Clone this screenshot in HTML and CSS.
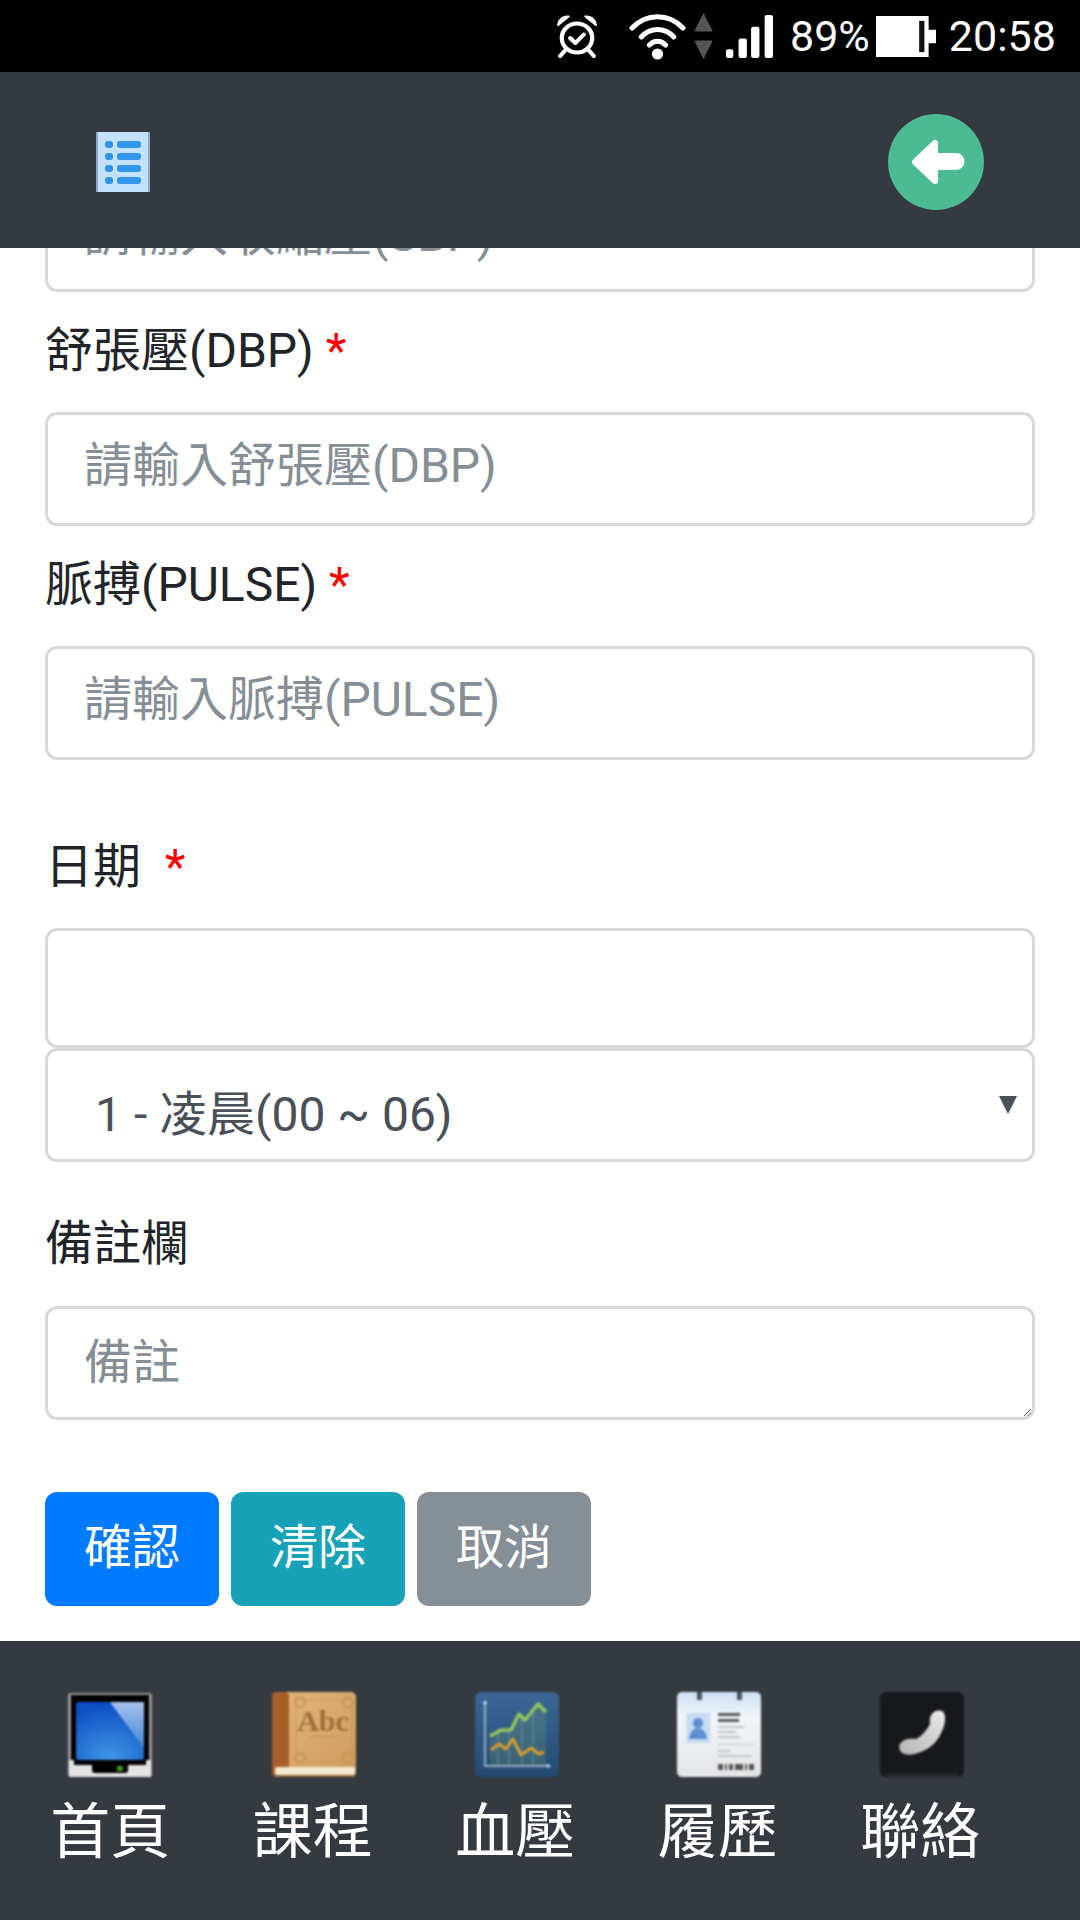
FILE: index.html
```html
<!DOCTYPE html>
<html lang="zh-Hant">
  <head>
    <meta charset="UTF-8" />
    <meta name="viewport" content="width=device-width, initial-scale=1.0" />
    <title>血壓</title>
    <link rel="stylesheet" href="styles.css">
  </head>
  <body>
    <div class="status-bar">
      <!-- alarm -->
      <svg class="st-alarm" width="42" height="44" viewBox="0 0 40 44" preserveAspectRatio="none" fill="none" stroke="#fff">
        <circle cx="20" cy="24" r="14.5" stroke-width="4" />
        <path d="M13.500 24l5 5 8-8.500" stroke-width="4" stroke-linecap="round" stroke-linejoin="round" />
        <path d="M2 11C3 5 7 2 12 2.500z M38 11C37 5 33 2 28 2.500z" fill="#fff" stroke-width="2" stroke-linejoin="round" />
        <path d="M9 36l-5 6M31 36l5 6" stroke-width="4" stroke-linecap="round" />
      </svg>
      <!-- wifi -->
      <svg class="st-wifi" width="57" height="48" viewBox="0 0 56 48" preserveAspectRatio="none" fill="none" stroke="#fff" stroke-width="5" stroke-linecap="round">
        <path d="M3 16C17 1 39 1 53 16" />
        <path d="M12 25C21 15 35 15 44 25" />
        <path d="M20 33C25 28 31 28 36 33" />
        <circle cx="28" cy="42" r="5.500" fill="#fff" stroke="none" />
      </svg>
      <!-- up and down arrows next to wifi -->
      <svg class="st-arrows" width="19" height="46" viewBox="0 0 18 46" preserveAspectRatio="none" fill="#545454">
        <path d="M9 1l8 17H1z M9 45L1 28h16z" stroke="#545454" stroke-linejoin="round" />
      </svg>
      <!-- signal -->
      <svg class="st-signal" width="47" height="43" viewBox="0 0 45 44" preserveAspectRatio="none" fill="#fff">
        <rect x="0" y="35" width="7" height="9" rx="2" />
        <rect x="12" y="24" width="8" height="20" rx="2" />
        <rect x="24" y="12" width="8" height="32" rx="2" />
        <rect x="37" y="0" width="8" height="44" rx="2" />
      </svg>
      <span class="st-text st-pct">89%</span>
      <!-- battery -->
      <svg class="st-battery" width="60" height="41" viewBox="0 0 57 42" preserveAspectRatio="none">
        <path d="M0 0h50v14h7v14h-7v14H0z" fill="#fff" />
        <rect x="41" y="5" width="5" height="32" fill="#111" />
      </svg>
      <span class="st-text st-time">20:58</span>
    </div>

    <header class="top-bar">
      <svg class="menu-icon blur" width="54" height="60" viewBox="0 0 54 60">
        <rect width="54" height="60" fill="#c4e1fb" />
        <rect width="2" height="60" fill="#8fa9c0" />
        <rect x="52" width="2" height="60" fill="#8fa9c0" />
        <g fill="#2f96ec">
          <rect x="9" y="9" width="8" height="7" rx="3" />
          <rect x="21" y="9" width="24" height="7" rx="3" />
          <rect x="9" y="21" width="8" height="7" rx="3" />
          <rect x="21" y="21" width="24" height="7" rx="3" />
          <rect x="9" y="33" width="8" height="7" rx="3" />
          <rect x="21" y="33" width="24" height="7" rx="3" />
          <rect x="9" y="45" width="8" height="7" rx="3" />
          <rect x="21" y="45" width="24" height="7" rx="3" />
        </g>
      </svg>
      <svg class="back-icon blur" width="96" height="96" viewBox="0 0 96 96">
        <circle cx="48" cy="48" r="48" fill="#4cbb94" />
        <path d="M27 48L47 29V42H68a5.500 5.500 0 0 1 0 11H47V67z" fill="#fff" stroke="#fff" stroke-width="6" stroke-linejoin="round" />
      </svg>
    </header>

    <main class="content">
      <form class="record-form">
        <div class="form-group clipped">
          <input class="form-control" type="text" placeholder="請輸入收縮壓(SBP)" />
        </div>
        <div class="form-group">
          <label>舒張壓(DBP) <span class="required">*</span></label>
          <input class="form-control" type="text" placeholder="請輸入舒張壓(DBP)" />
        </div>
        <div class="form-group">
          <label>脈搏(PULSE) <span class="required">*</span></label>
          <input class="form-control" type="text" placeholder="請輸入脈搏(PULSE)" />
        </div>
        <div class="form-group date-group">
          <label>日期 &nbsp;<span class="required">*</span></label>
          <input class="form-control date-input" type="text" />
          <div class="select-wrap">
            <select class="form-control period-select">
              <option>1 - 凌晨(00 ~ 06)</option>
            </select>
          </div>
        </div>
        <div class="form-group note-group">
          <label>備註欄</label>
          <textarea class="form-control" placeholder="備註"></textarea>
        </div>
        <div class="buttons">
          <button type="button" class="btn btn-primary">確認</button>
          <button type="button" class="btn btn-info">清除</button>
          <button type="button" class="btn btn-secondary">取消</button>
        </div>
      </form>
    </main>

    <footer class="bottom-nav">
      <a class="nav-item">
        <svg width="86" height="86" viewBox="0 0 86 86">
          <defs>
            <radialGradient id="screenGrad" cx="0.5" cy="0.95" r="0.9">
              <stop offset="0" stop-color="#3f97e4" />
              <stop offset="1" stop-color="#0f4fc4" />
            </radialGradient>
            <linearGradient id="shineGrad" x1="0" y1="0" x2="0" y2="1">
              <stop offset="0" stop-color="#a9c2ee" />
              <stop offset="1" stop-color="#3f86dc" />
            </linearGradient>
          </defs>
          <rect x="1" y="1" width="84" height="84" rx="3" fill="#9a9a9a" />
          <rect x="4" y="3" width="78" height="70" fill="#000" />
          <rect x="9" y="10" width="68" height="58" rx="2" fill="url(#screenGrad)" />
          <path d="M43 10h34v46z" fill="url(#shineGrad)" />
          <path d="M2 68h5v5h72v-5h5v14a3 3 0 0 1-3 3H5a3 3 0 0 1-3-3z" fill="#e4e4e4" />
          <path d="M2 73h82v12H2z" fill="#e4e4e4" />
          <path d="M25 72h36v6a3 3 0 0 1-3 3H28a3 3 0 0 1-3-3z" fill="#000" />
          <rect x="50" y="74" width="6" height="5" fill="#3e9a22" />
        </svg>
        <span>首頁</span>
      </a>
      <a class="nav-item">
        <svg width="86" height="86" viewBox="0 0 86 86">
          <defs>
            <linearGradient id="coverGrad" x1="0" y1="0" x2="1" y2="1">
              <stop offset="0" stop-color="#e2b67c" />
              <stop offset="1" stop-color="#cf9c5e" />
            </linearGradient>
          </defs>
          <rect x="0" y="0" width="84" height="85" rx="5" fill="url(#coverGrad)" />
          <rect x="0" y="0" width="17" height="84" rx="4" fill="#a85f2a" />
          <rect x="3" y="75" width="80" height="8" rx="2" fill="#f3ead3" />
          <rect x="3" y="83" width="80" height="2" rx="1" fill="#9a6a3a" />
          <rect x="24" y="8" width="56" height="62" fill="none" stroke="#c49758" stroke-width="1" />
          <g fill="none" stroke="#c49758" stroke-width="2">
            <circle cx="28" cy="10" r="5" />
            <circle cx="76" cy="10" r="5" />
            <circle cx="28" cy="66" r="5" />
            <circle cx="76" cy="66" r="5" />
          </g>
          <text x="51" y="39" text-anchor="middle" class="book-title">Abc</text>
          <rect x="38" y="44" width="27" height="1.500" fill="#c09560" />
        </svg>
        <span>課程</span>
      </a>
      <a class="nav-item">
        <svg width="86" height="86" viewBox="0 0 86 86">
          <defs>
            <linearGradient id="chartGrad" x1="0" y1="0" x2="0" y2="1">
              <stop offset="0" stop-color="#3d6796" />
              <stop offset="1" stop-color="#234a72" />
            </linearGradient>
          </defs>
          <rect x="0" y="0" width="84" height="85" rx="6" fill="url(#chartGrad)" />
          <path d="M15 44L26 38H36L44 22L50 28L63 12L71 20V74H15z" fill="#8fc46a" opacity="0.18" />
          <g stroke="#a4bcd4" stroke-width="1" opacity="0.4">
            <path d="M23 40v34M34 38v36M47 26v48M58 18v56" />
          </g>
          <path d="M10 10v64h64" fill="none" stroke="#b9c9d8" stroke-width="1.500" />
          <path d="M10 8l-2 4h4z M76 74l-4-2v4z" fill="#e6edf3" />
          <path d="M15 44L26 38H36L44 22L50 28L63 12L71 20" fill="none" stroke="#93c95c" stroke-width="3.500" stroke-linejoin="round" />
          <path d="M16 58L24 52L31 57L38 47L46 63L56 56L64 62L69 60" fill="none" stroke="#dd9f29" stroke-width="3" stroke-linejoin="round" />
        </svg>
        <span>血壓</span>
      </a>
      <a class="nav-item">
        <svg width="86" height="86" viewBox="0 0 86 86">
          <defs>
            <linearGradient id="cardGrad" x1="0" y1="0" x2="0" y2="1">
              <stop offset="0" stop-color="#cfe1f5" />
              <stop offset="0.3" stop-color="#f1f4f8" />
              <stop offset="1" stop-color="#e4e5e7" />
            </linearGradient>
          </defs>
          <rect x="0" y="0" width="84" height="85" rx="5" fill="url(#cardGrad)" />
          <rect x="20" y="0" width="5" height="8" fill="#4c5560" />
          <rect x="60" y="0" width="5" height="8" fill="#4c5560" />
          <rect x="9" y="21" width="24" height="30" fill="#c8dcf3" />
          <circle cx="21" cy="31" r="5" fill="#5c8fcf" />
          <path d="M12 47c1-8 5-11 9-11s8 3 9 11z" fill="#5c8fcf" />
          <g fill="#5a5a5a">
            <rect x="41" y="21" width="22" height="3" />
            <rect x="41" y="27" width="21" height="3" />
          </g>
          <g fill="#c2c4c8">
            <rect x="41" y="34" width="26" height="2" />
            <rect x="41" y="39" width="18" height="2" />
            <rect x="41" y="44" width="22" height="2" />
            <rect x="41" y="52" width="36" height="1" />
            <rect x="41" y="58" width="12" height="2" />
            <rect x="41" y="63" width="34" height="2" />
          </g>
          <path d="M41 72h5v6h-5zM48 72h2v6h-2zM52 72h4v6h-4zM58 72h8v6h-8zM68 72h2v6h-2zM72 72h5v6h-5z" fill="#555" />
        </svg>
        <span>履歷</span>
      </a>
      <a class="nav-item">
        <svg width="86" height="86" viewBox="0 0 86 86">
          <defs>
            <linearGradient id="phoneGrad" x1="1" y1="0" x2="0" y2="1">
              <stop offset="0" stop-color="#ececec" />
              <stop offset="1" stop-color="#b4b4b4" />
            </linearGradient>
          </defs>
          <rect x="0" y="0" width="84" height="85" rx="6" fill="#16181c" />
          <rect x="6" y="82" width="72" height="1.500" fill="#34363a" />
          <path d="M52 22c2-4 10-5 12-1 2 4 1 12-2 18-4 10-11 17-21 21-8 3-16 4-20 0-3-4-2-9 2-11 4-3 9-2 13-2 6-3 11-9 14-15 0-3-1-7 2-10z" fill="url(#phoneGrad)" />
        </svg>
        <span>聯絡</span>
      </a>
    </footer>
  </body>
</html>
```

FILE: styles.css
```css
* {
  box-sizing: border-box;
}

body {
  margin: 0;
  width: 1080px;
  height: 1920px;
  overflow: hidden;
  display: flex;
  flex-direction: column;
  background-color: #fff;
  color: #212529;
  font-family: Roboto, "Noto Sans CJK TC", sans-serif;
  font-size: 48px;
  line-height: 1.5;
}

/* Status bar */
.status-bar {
  height: 72px;
  flex-shrink: 0;
  background-color: #000;
  display: flex;
  align-items: center;
  padding-left: 556px;
  color: #fff;
}

.st-wifi {
  margin-left: 31px;
}

.st-arrows {
  margin-left: 8px;
}

.st-signal {
  margin-left: 13px;
}

.st-text {
  font-size: 43px;
  line-height: 74px;
}

.st-pct {
  margin-left: 17px;
}

.st-battery {
  margin-left: 6px;
}

.st-time {
  margin-left: 13px;
}

/* Top bar */
.top-bar {
  height: 176px;
  flex-shrink: 0;
  background-color: #343a40;
  display: flex;
  justify-content: space-between;
  align-items: center;
  padding: 4px 96px 0;
}

.blur {
  filter: blur(0.6px);
}

/* Form */
.content {
  height: 1393px;
  flex-shrink: 0;
  overflow: hidden;
  padding: 0 45px;
}

.clipped {
  margin-top: -70px;
}

.form-group {
  margin-bottom: 23px;
}

.date-group {
  margin-top: 71px;
  margin-bottom: 46px;
}

label {
  display: block;
  margin-bottom: 25px;
}

.form-control {
  display: block;
  width: 100%;
  height: 114px;
  padding: 18px 36px;
  font-family: inherit;
  font-size: 48px;
  line-height: 1.5;
  color: #495057;
  background-color: #fff;
  border: 3px solid #d9d9d9;
  border-radius: 12px;
  outline: none;
}

input.form-control {
  padding-top: 14px;
  padding-bottom: 22px;
}

/* this one is scrolled under the top bar, its text sits a bit lower */
.clipped input.form-control {
  padding-top: 17px;
  padding-bottom: 19px;
}

.form-control::placeholder {
  color: #868e96;
  opacity: 1;
}

.required {
  color: #f00;
}

.date-input {
  height: 120px;
}

.select-wrap {
  position: relative;
}

.period-select {
  appearance: none;
  padding: 28px 36px 8px 47px;
}

.select-wrap::after {
  content: "";
  position: absolute;
  top: 48px;
  right: 18px;
  border-left: 9px solid transparent;
  border-right: 9px solid transparent;
  border-top: 18px solid #495057;
}

textarea.form-control {
  resize: vertical;
}

.note-group {
  margin-bottom: 72px;
}

.note-group label {
  margin-bottom: 26px;
}

/* Buttons */
.buttons {
  display: flex;
  gap: 12px;
}

.btn {
  width: 174px;
  height: 114px;
  padding: 0 0 12px;
  border: none;
  border-radius: 12px;
  color: #fff;
  font-family: inherit;
  font-size: 48px;
}

.btn-primary {
  background-color: #007bff;
}

.btn-info {
  background-color: #17a2b8;
}

.btn-secondary {
  background-color: #868e96;
}

/* Bottom nav */
.bottom-nav {
  flex: 1;
  background-color: #343a40;
  display: flex;
  padding: 51px 0 0 9px;
}

.nav-item {
  width: 202.500px;
  display: flex;
  flex-direction: column;
  align-items: center;
  color: #fff;
  font-size: 60px;
  line-height: 1;
  gap: 25px;
}

.nav-item svg {
  display: block;
  filter: blur(1px);
}

.nav-item + .nav-item svg {
  margin-left: 5px;
}

.book-title {
  font-family: "Liberation Serif", serif;
  font-size: 30px;
  font-weight: bold;
  fill: #9c7038;
}
```
